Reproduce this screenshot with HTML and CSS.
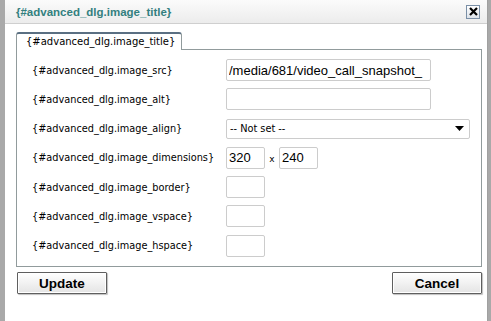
FILE: index.html
```html
<!DOCTYPE html>
<html lang="en">
<head>
    <meta charset="UTF-8">
    <title>{#advanced_dlg.image_title}</title>
    <link rel="stylesheet" href="styles.css">
</head>
<body>
    <div class="dialog">
        <div class="titlebar">
            <span class="title">{#advanced_dlg.image_title}</span>
            <button class="close" title="Close">
                <svg width="9" height="9" viewBox="0 0 9 9"><path d="M1 1L8 8M8 1L1 8" stroke="#000" stroke-width="2.2"/></svg>
            </button>
        </div>
        <div class="content">
            <div class="tabs">
                <span class="tab">{#advanced_dlg.image_title}</span>
            </div>
            <div class="panel">
                <div class="row">
                    <label>{#advanced_dlg.image_src}</label>
                    <input type="text" class="field wide" value="/media/681/video_call_snapshot_">
                </div>
                <div class="row">
                    <label>{#advanced_dlg.image_alt}</label>
                    <input type="text" class="field wide">
                </div>
                <div class="row">
                    <label>{#advanced_dlg.image_align}</label>
                    <div class="select">
                        <span>-- Not set --</span>
                        <svg width="9" height="5" viewBox="0 0 9 5"><path d="M0 0H9L4.5 5Z" fill="#000"/></svg>
                    </div>
                </div>
                <div class="row">
                    <label>{#advanced_dlg.image_dimensions}</label>
                    <input type="text" class="field small" value="320">
                    <span class="times">x</span>
                    <input type="text" class="field small" value="240">
                </div>
                <div class="row">
                    <label>{#advanced_dlg.image_border}</label>
                    <input type="text" class="field small">
                </div>
                <div class="row">
                    <label>{#advanced_dlg.image_vspace}</label>
                    <input type="text" class="field small">
                </div>
                <div class="row">
                    <label>{#advanced_dlg.image_hspace}</label>
                    <input type="text" class="field small">
                </div>
            </div>
            <div class="actions">
                <button class="btn">Update</button>
                <button class="btn">Cancel</button>
            </div>
        </div>
    </div>
</body>
</html>
```

FILE: styles.css
```css
body {
    margin: 0;
    background: #a9a9a9;
    font-family: "DejaVu Sans", Verdana, sans-serif;
    font-size: 9.75px;
    color: #000;
}
.dialog {
    margin-left: 5px;
    width: 483px;
    height: 321px;
    background: #fff;
    border-right: 1px solid #a0a0a0;
    box-sizing: border-box;
}
.titlebar {
    height: 24px;
    box-sizing: border-box;
    display: flex;
    align-items: center;
    justify-content: space-between;
    padding: 0 7px 0 11px;
    background: linear-gradient(#fbfbfb, #ececec);
    border-bottom: 1px solid #cfcfcf;
}
.title {
    font-family: "Liberation Sans", Arial, sans-serif;
    font-weight: bold;
    font-size: 11.5px;
    color: #33807f;
}
.close {
    width: 14px;
    height: 14px;
    padding: 0;
    margin: 0;
    border: 1px solid #7a8fa6;
    background: linear-gradient(#ffffff, #dde3ea);
    display: flex;
    align-items: center;
    justify-content: center;
}
.content {
    padding: 8px 0 0 11px;
    width: 466px;
}
.tabs {
    display: flex;
    height: 17px;
}
.tab {
    width: 166px;
    box-sizing: border-box;
    border: 1px solid #919b9c;
    border-top: 2px solid #5a6f82;
    border-bottom: none;
    border-radius: 3px 3px 0 0;
    background: #fff;
    padding: 2px 0 0 9px;
    font-size: 10px;
    margin-bottom: -1px;
    position: relative;
    z-index: 1;
}
.panel {
    border: 1px solid #919b9c;
    height: 218px;
    box-sizing: border-box;
    padding: 9px 0 0 15px;
    display: flex;
    flex-direction: column;
    gap: 7.3px;
}
.row {
    display: flex;
    align-items: center;
    height: 22px;
}
.row label {
    width: 194px;
}
.field {
    height: 22px;
    box-sizing: border-box;
    border: 1px solid #ccc;
    border-radius: 2px;
    padding: 0 2px;
    font-family: "Liberation Sans", Arial, sans-serif;
    font-size: 13px;
    color: #000;
    margin: 0;
}
.wide {
    width: 205px;
}
.small {
    width: 39px;
}
.times {
    width: 14px;
    text-align: center;
    font-size: 9px;
    padding-top: 2px;
}
.select {
    width: 244px;
    height: 20px;
    box-sizing: border-box;
    border: 1px solid #ccc;
    border-radius: 2px;
    display: flex;
    align-items: center;
    justify-content: space-between;
    padding: 0 5px 0 3px;
}
.actions {
    display: flex;
    justify-content: space-between;
    padding: 5px 0 0 1px;
}
.btn {
    width: 90px;
    height: 22px;
    border: 1px solid #5f5f5f;
    border-radius: 1px;
    background: linear-gradient(#ffffff, #e4e4e4);
    box-shadow: inset 0 0 0 1px #fff, 1px 1px 1px rgba(0, 0, 0, 0.25);
    font-family: "Liberation Sans", Arial, sans-serif;
    font-weight: bold;
    font-size: 13.5px;
    color: #000;
    padding: 0;
}
```
